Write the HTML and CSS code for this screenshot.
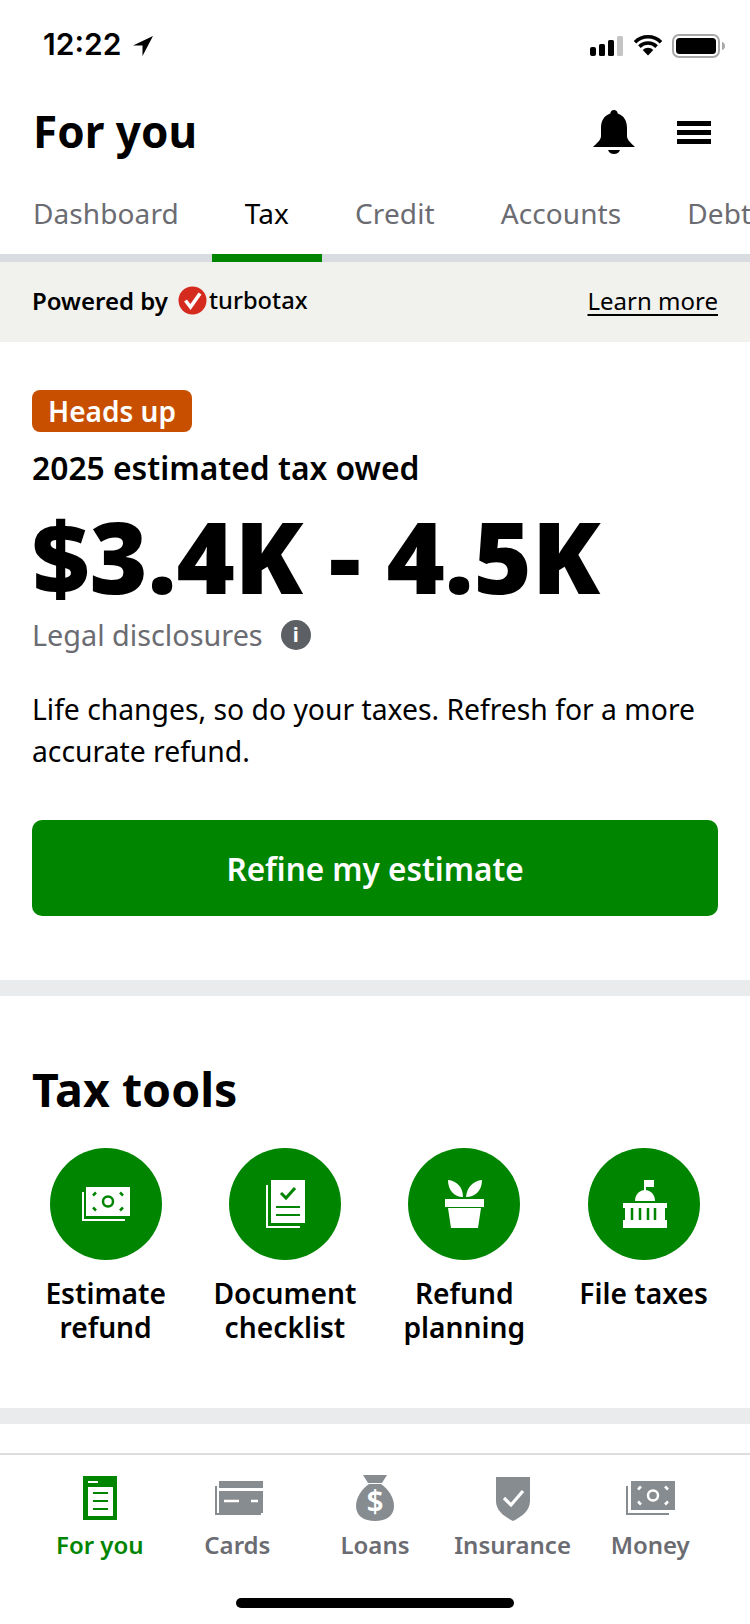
FILE: index.html
```html
<!DOCTYPE html>
<html lang="en">
<head>
  <meta charset="UTF-8" />
  <meta name="viewport" content="width=device-width, initial-scale=1.0" />
  <title>For you - Tax</title>
  <link rel="stylesheet" href="styles.css">
</head>
<body>
  <div class="status-bar">
    <div class="status-time">
      <span>12:22</span>
      <svg class="status-arrow" width="22" height="22" viewBox="0 0 22 22"><path d="M21 1 1 10.500h9.500V21z" fill="#000"/></svg>
    </div>
    <div class="status-icons">
      <svg width="34" height="22" viewBox="0 0 34 22">
        <rect x="0" y="12" width="6" height="9" rx="2" fill="#000"/>
        <rect x="9" y="9" width="6" height="12" rx="1.500" fill="#000"/>
        <rect x="18" y="5" width="6" height="16" rx="1.500" fill="#000"/>
        <rect x="27" y="1" width="6" height="20" rx="1.500" fill="#c4c4c4"/>
      </svg>
      <svg width="30" height="22" viewBox="0 0 30 22">
        <path d="M15 20.500 9.700 15a7.500 7.500 0 0 1 10.600 0z" fill="#000"/>
        <path d="M6.400 11.600a12.200 12.200 0 0 1 17.200 0M2 7.200a18.400 18.400 0 0 1 26 0" fill="none" stroke="#000" stroke-width="3.600"/>
      </svg>
      <svg width="54" height="24" viewBox="0 0 54 24">
        <rect x="1" y="1" width="46" height="22" rx="6" fill="none" stroke="#a8a8a8" stroke-width="2"/>
        <rect x="4" y="4" width="40" height="16" rx="3.500" fill="#000"/>
        <path d="M50 8c2 .5 3 2 3 4s-1 3.500-3 4z" fill="#a8a8a8"/>
      </svg>
    </div>
  </div>

  <header class="page-header">
    <h1>For you</h1>
    <div class="header-icons">
      <svg width="44" height="46" viewBox="0 0 44 46">
        <path d="M22 1c2.200 0 3.500 1.500 3.700 3.500C32 6.500 35 12 35 19v8c0 4 4 7 8 11H1c4-4 8-7 8-11v-8C9 12 12 6.500 18.300 4.500 18.500 2.500 19.800 1 22 1z" fill="#000"/>
        <path d="M16 41h12c-1 2.500-3 4-6 4s-5-1.500-6-4z" fill="#000"/>
      </svg>
      <div class="menu-icon"><i></i><i></i><i></i></div>
    </div>
  </header>

  <nav class="tabs">
    <a class="tab">Dashboard</a>
    <a class="tab active">Tax</a>
    <a class="tab">Credit</a>
    <a class="tab">Accounts</a>
    <a class="tab">Debt</a>
  </nav>

  <div class="powered">
    <div class="powered-left">
      <span>Powered by</span>
      <svg width="29" height="29" viewBox="0 0 29 29">
        <circle cx="14.500" cy="14.500" r="14" fill="#d52b1e"/>
        <path d="M7.500 14.500 12.500 21 22 7.500" fill="none" stroke="#fff" stroke-width="3.600"/>
      </svg>
      <span class="turbotax">turbotax</span>
    </div>
    <a class="learn-more">Learn more</a>
  </div>

  <section class="estimate">
    <span class="badge">Heads up</span>
    <h2 class="estimate-label">2025 estimated tax owed</h2>
    <div class="amount">$3.4K - 4.5K</div>
    <div class="legal">
      <span>Legal disclosures</span>
      <span class="info-dot">i</span>
    </div>
    <p class="estimate-copy">Life changes, so do your taxes. Refresh for a more accurate refund.</p>
    <button class="primary-button">Refine my estimate</button>
  </section>

  <section class="tools">
    <h2>Tax tools</h2>
    <div class="tools-grid">
      <div class="tool">
        <div class="tool-circle">
          <svg width="112" height="112" viewBox="0 0 112 112">
            <path d="M32 44h2v27h41v2H32z" fill="#fff"/>
            <path d="M36 39h44v29H36z" fill="#fff"/>
            <circle cx="58" cy="53.500" r="5" fill="none" stroke="#008500" stroke-width="2.500"/>
            <path d="M46 44.500l-3 3M70 44.500l3 3M46 62.500l-3-3M70 62.500l3-3" stroke="#008500" stroke-width="2.500"/>
          </svg>
        </div>
        <span>Estimate<br>refund</span>
      </div>
      <div class="tool">
        <div class="tool-circle">
          <svg width="112" height="112" viewBox="0 0 112 112">
            <path d="M37 37h2v41h32v2H37z" fill="#fff"/>
            <path d="M42 32h34v43H42z" fill="#fff"/>
            <path d="M52 45l5 5 9-10" fill="none" stroke="#008500" stroke-width="3"/>
            <path d="M47 59h24M47 67h24" stroke="#008500" stroke-width="2"/>
          </svg>
        </div>
        <span>Document<br>checklist</span>
      </div>
      <div class="tool">
        <div class="tool-circle">
          <svg width="112" height="112" viewBox="0 0 112 112">
            <path d="M40 32c9 1 15 7 15 17-9 0-15-7-15-17zM74 32c-9 1-15 7-16 17 10 0 16-7 16-17z" fill="#fff"/>
            <path d="M37 51h39v8H37zM40 60h33l-3 20H43z" fill="#fff"/>
          </svg>
        </div>
        <span>Refund<br>planning</span>
      </div>
      <div class="tool">
        <div class="tool-circle">
          <svg width="112" height="112" viewBox="0 0 112 112">
            <path d="M56 32h10v7h-8v4h-2z" fill="#fff"/>
            <path d="M47 53c0-6 4-11 10-11s10 5 10 11z" fill="#fff"/>
            <path d="M35 55h44v5h-2v12h2v8H35v-8h2V60h-2z" fill="#fff"/>
            <path d="M44 60v12M52 60v12M60 60v12M67 60v12" stroke="#008500" stroke-width="2.500"/>
          </svg>
        </div>
        <span>File taxes</span>
      </div>
    </div>
  </section>

  <div class="spacer"></div>

  <nav class="bottom-nav">
    <div class="nav-item active">
      <svg width="60" height="48" viewBox="0 0 60 48">
        <path d="M13 2h34v44H13z" fill="#008500"/>
        <path d="M18 13h25v29H18zM18 7h10v2H18z" fill="#fff"/>
        <path d="M23 19h15M23 27h15M23 35h15" stroke="#008500" stroke-width="2"/>
      </svg>
      <span>For you</span>
    </div>
    <div class="nav-item">
      <svg width="60" height="48" viewBox="0 0 60 48">
        <path d="M8 12h2v27h44v2H8z" fill="#878c91"/>
        <path d="M12 7h44v7H12zM12 17h44v22H12z" fill="#878c91"/>
        <path d="M17 27h15M44 27h7" stroke="#fff" stroke-width="2.500"/>
      </svg>
      <span>Cards</span>
    </div>
    <div class="nav-item">
      <svg width="60" height="48" viewBox="0 0 60 48">
        <path d="M18 1h24l-5 8H23z" fill="#878c91"/>
        <path d="M24 10h12c7 5 13 13 13 22 0 10-8 15-19 15s-19-5-19-15c0-9 6-17 13-22z" fill="#878c91"/>
        <text class="loan-sign" x="30" y="38" text-anchor="middle">$</text>
      </svg>
      <span>Loans</span>
    </div>
    <div class="nav-item">
      <svg width="60" height="48" viewBox="0 0 60 48">
        <path d="M13 3h34v24c0 10-9 16-17 20-8-4-17-10-17-20z" fill="#878c91"/>
        <path d="M21 24l7 7 12-14" fill="none" stroke="#fff" stroke-width="3.200"/>
      </svg>
      <span>Insurance</span>
    </div>
    <div class="nav-item">
      <svg width="60" height="48" viewBox="0 0 60 48">
        <path d="M6 12h2v27h41v2H6z" fill="#878c91"/>
        <path d="M11 7h44v29H11z" fill="#878c91"/>
        <circle cx="33" cy="21.500" r="5" fill="none" stroke="#fff" stroke-width="2.500"/>
        <path d="M21 12.500l-3 3M45 12.500l3 3M21 30.500l-3-3M45 30.500l3-3" stroke="#fff" stroke-width="2.500"/>
      </svg>
      <span>Money</span>
    </div>
  </nav>

  <div class="home-bar"><div class="home-indicator"></div></div>
</body>
</html>
```

FILE: styles.css
```css
html, body {
  margin: 0;
  padding: 0;
  height: 100%;
  font-family: 'Noto Sans', sans-serif;
  background: #ffffff;
  color: #000000;
  overflow: hidden;
}
body {
  display: flex;
  flex-direction: column;
}
svg {
  display: block;
}
.status-bar {
  height: 88px;
  display: flex;
  justify-content: space-between;
  align-items: center;
  padding: 0 24px 0 43px;
  box-sizing: border-box;
  flex-shrink: 0;
}
.status-time {
  display: flex;
  align-items: center;
  gap: 11px;
  font-family: 'Inter', sans-serif;
  font-size: 30px;
  font-weight: 600;
}
.status-arrow {
  margin-top: 4px;
}
.status-icons {
  display: flex;
  align-items: center;
  gap: 9px;
  margin-top: 3px;
}
.page-header {
  height: 88px;
  display: flex;
  justify-content: space-between;
  align-items: center;
  padding: 0 39px 0 33px;
  flex-shrink: 0;
}
.page-header h1 {
  margin: -2px 0 0;
  font-size: 44px;
  font-weight: 700;
}
.header-icons {
  display: flex;
  align-items: center;
  gap: 41px;
}
.menu-icon {
  display: flex;
  flex-direction: column;
  gap: 4px;
}
.menu-icon i {
  display: block;
  width: 34px;
  height: 5px;
  background: #000;
}
.tabs {
  height: 86px;
  display: flex;
  box-shadow: inset 0 -8px 0 #d8dce0;
  white-space: nowrap;
  overflow: hidden;
  flex-shrink: 0;
}
.tab {
  padding: 0 33px 12px;
  display: flex;
  align-items: center;
  font-size: 28px;
  letter-spacing: 0.1px;
  color: #6b6c72;
  box-sizing: border-box;
}
.tab.active {
  color: #000;
  border-bottom: 8px solid #008500;
  padding-bottom: 4px;
}
.powered {
  height: 80px;
  background: #f1f2ee;
  display: flex;
  justify-content: space-between;
  align-items: center;
  padding: 0 32px 4px;
  box-sizing: border-box;
  flex-shrink: 0;
}
.powered-left {
  display: flex;
  align-items: center;
  font-size: 24px;
  font-weight: 600;
}
.powered-left svg {
  margin: 0 2px 0 10px;
}
.turbotax {
  font-size: 23.700px;
  font-weight: 500;
}
.learn-more {
  font-size: 24px;
  text-decoration: underline;
  text-underline-offset: 4px;
}
.estimate {
  padding: 48px 32px 64px;
  border-bottom: 16px solid #e9ebec;
  flex-shrink: 0;
}
.badge {
  display: inline-block;
  background: #c94f00;
  color: #fff;
  font-size: 28px;
  font-weight: 600;
  line-height: 42px;
  padding: 0 16px;
  border-radius: 8px;
}
.estimate-label {
  margin: 15px 0 0;
  font-size: 31.800px;
  font-weight: 600;
  line-height: 42px;
}
.amount {
  font-size: 99.500px;
  font-weight: 900;
  line-height: 100px;
  margin-top: 17px;
}
.legal {
  display: flex;
  align-items: center;
  gap: 18px;
  margin-top: 8px;
  font-size: 28.800px;
  line-height: 42px;
  color: #6b6c72;
}
.info-dot {
  width: 30px;
  height: 30px;
  border-radius: 50%;
  background: #5c5f63;
  color: #fff;
  font-size: 20px;
  font-weight: 700;
  line-height: 30px;
  text-align: center;
}
.estimate-copy {
  margin: 32px 0 0;
  font-size: 28.300px;
  line-height: 42px;
}
.primary-button {
  display: block;
  width: 100%;
  height: 96px;
  margin-top: 48px;
  border: none;
  border-radius: 10px;
  background: #008500;
  color: #fff;
  font-family: inherit;
  font-size: 31.500px;
  font-weight: 600;
}
.tools {
  padding: 61px 32px 64px;
  border-bottom: 16px solid #e9ebec;
  flex-shrink: 0;
}
.tools h2 {
  margin: 0;
  font-size: 46.500px;
  font-weight: 700;
  line-height: 64px;
}
.tools-grid {
  display: grid;
  grid-template-columns: repeat(4, 179.300px);
  margin: 27px 0 0 -16px;
}
.tool {
  display: flex;
  flex-direction: column;
  align-items: center;
  text-align: center;
  font-size: 28.200px;
  font-weight: 600;
  line-height: 34px;
  white-space: nowrap;
}
.tool-circle {
  width: 112px;
  height: 112px;
  border-radius: 50%;
  background: #008500;
  margin-bottom: 16px;
}
.spacer {
  flex: 1;
}
.bottom-nav {
  border-top: 2px solid #dddddd;
  padding: 19px 31px 1px;
  display: grid;
  grid-template-columns: repeat(5, 1fr);
  flex-shrink: 0;
}
.nav-item {
  display: flex;
  flex-direction: column;
  align-items: center;
  gap: 6px;
  font-size: 24px;
  font-weight: 600;
  line-height: 34px;
  color: #6b6c72;
}
.nav-item.active {
  color: #008500;
}
.loan-sign {
  font-family: 'Noto Sans', sans-serif;
  font-size: 30px;
  font-weight: 600;
  fill: #fff;
}
.home-bar {
  height: 61px;
  display: flex;
  justify-content: center;
  padding-top: 35px;
  box-sizing: border-box;
  flex-shrink: 0;
}
.home-indicator {
  width: 278px;
  height: 10px;
  border-radius: 5px;
  background: #000;
}
```
